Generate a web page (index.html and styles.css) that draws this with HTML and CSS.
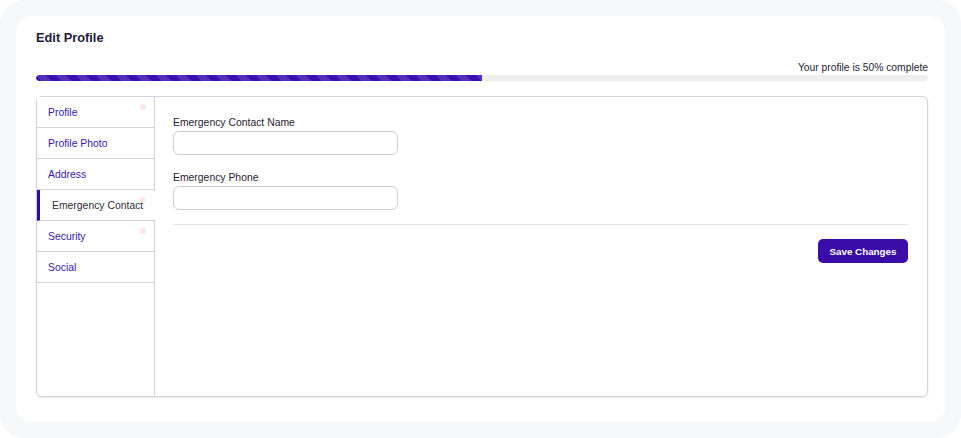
FILE: index.html
```html
<!DOCTYPE html>
<html>
<head>
<meta charset="utf-8">
<link rel="stylesheet" href="styles.css">
</head>
<body>
<div class="frame">
  <div class="card">
    <h1 class="title">Edit Profile</h1>
    <div class="progress-label">Your profile is 50% complete</div>
    <div class="progress"><div class="progress-fill" style="width:50%"></div></div>
    <div class="panel">
      <nav class="tabs">
        <a class="tab">Profile<span class="dot"></span></a>
        <a class="tab">Profile Photo</a>
        <a class="tab">Address</a>
        <a class="tab active">Emergency Contact<span class="dot"></span></a>
        <a class="tab">Security<span class="dot"></span></a>
        <a class="tab">Social</a>
      </nav>
      <div class="content">
        <div class="field">
          <label class="label">Emergency Contact Name</label>
          <input class="input" type="text">
        </div>
        <div class="field">
          <label class="label">Emergency Phone</label>
          <input class="input" type="text">
        </div>
        <hr class="divider">
        <div class="actions">
          <button class="btn">Save Changes</button>
        </div>
      </div>
    </div>
  </div>
</div>
</body>
</html>
```

FILE: styles.css
```css
* { box-sizing: border-box; }
html, body { margin: 0; padding: 0; background: #ffffff; }
body {
  font-family: "Liberation Sans", Arial, sans-serif;
  color: #1f1d33;
  width: 961px;
  height: 438px;
  overflow: hidden;
}
.frame {
  width: 961px;
  height: 438px;
  background: #f7f8fa;
  border-radius: 24px;
  padding: 16px;
}
.card {
  background: #ffffff;
  border-radius: 16px;
  height: 406px;
  width: 929px;
  padding: 13px 17px 0 20px;
  display: flex;
  flex-direction: column;
}
.title {
  margin: 0;
  font-size: 12.8px;
  font-weight: 700;
  line-height: 17px;
  color: #1e1b3a;
}
.progress-label {
  margin-top: 15px;
  text-align: right;
  font-size: 10.3px;
  line-height: 14px;
  color: #1f1d33;
}
.progress {
  height: 6px;
  background: #eeeeef;
  border-radius: 3px;
  overflow: hidden;
}
.progress-fill {
  height: 100%;
  background-color: #3a10b0;
  background-image: linear-gradient(45deg, rgba(255,255,255,0.13) 25%, transparent 25%, transparent 50%, rgba(255,255,255,0.13) 50%, rgba(255,255,255,0.13) 75%, transparent 75%, transparent);
  background-size: 20px 20px;
  border-radius: 3px 0 0 3px;
}
.panel {
  margin-top: 15px;
  height: 301px;
  border: 1px solid #d3d2de;
  border-radius: 6px;
  display: flex;
  box-shadow: 0 1px 2px rgba(40, 30, 80, 0.12);
}
.tabs {
  width: 118px;
  flex: none;
  display: flex;
  flex-direction: column;
  border-right: 1px solid #d3d2de;
  margin-right: -1px;
}
.tab {
  position: relative;
  display: block;
  height: 31px;
  line-height: 30px;
  padding-top: 1px;
  padding-left: 11px;
  font-size: 10.4px;
  color: #3a17b5;
  border-bottom: 1px solid #d3d2de;
  white-space: nowrap;
  background: #fff;
}
.tab.active {
  color: #2f2d3a;
  border-left: 3px solid #2c0ca8;
  padding-left: 12px;
  margin-right: -1px;
  z-index: 1;
}
.dot {
  position: absolute;
  top: 7px;
  right: 8px;
  width: 6px;
  height: 6px;
  border-radius: 50%;
  background: #fde5ea;
}
.tab.active .dot { right: 9px; }
.content {
  flex: 1;
  padding: 19px 19px 0 19px;
  display: flex;
  flex-direction: column;
}
.field {
  display: flex;
  flex-direction: column;
  margin-bottom: 16px;
}
.field + .field { margin-bottom: 0; }
.label {
  font-size: 10.4px;
  line-height: 14px;
  margin-bottom: 1px;
  color: #1f1d33;
}
.input {
  width: 225px;
  height: 24px;
  border: 1px solid #cfced6;
  border-radius: 6px;
  background: #fff;
  font: inherit;
  outline: none;
}
.divider {
  margin: 14px 0 0 0;
  border: none;
  border-top: 1px solid #e6e6ea;
  width: 100%;
}
.actions {
  display: flex;
  justify-content: flex-end;
  margin-top: 14px;
}
.btn {
  width: 90px;
  height: 24px;
  border: none;
  border-radius: 5px;
  background: #3a0ca8;
  color: #fff;
  font-family: inherit;
  font-size: 9.8px;
  font-weight: 700;
  cursor: pointer;
}
```
